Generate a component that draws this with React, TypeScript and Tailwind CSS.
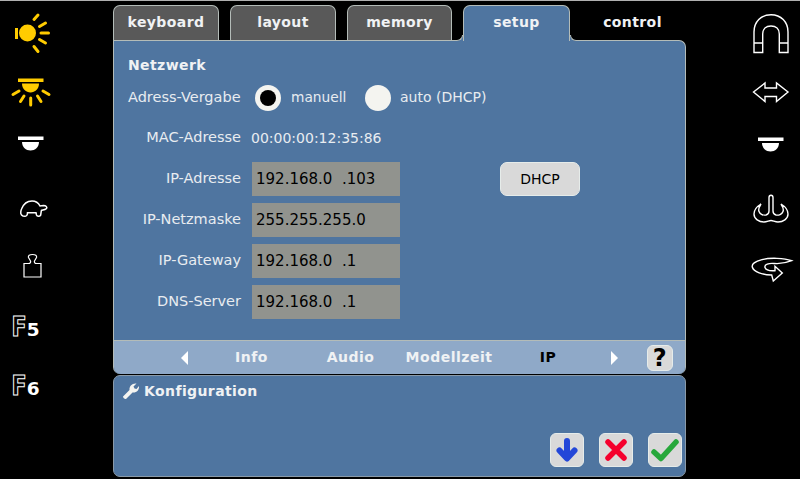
const sans = "font-['DejaVu_Sans',sans-serif]";

const tabs = [
  { label: "keyboard", cls: "w-[106px]" },
  { label: "layout", cls: "w-[106px]" },
  { label: "memory", cls: "w-[105px]" },
];
const subTabs = [
  { label: "Info", cls: "w-[99px] text-[#f0f2f4]" },
  { label: "Audio", cls: "w-[99px] text-[#f0f2f4]" },
  { label: "Modellzeit", cls: "w-[98px] text-[#f0f2f4]" },
  { label: "IP", cls: "w-[100px] text-black" },
];
const ipRows = [
  { label: "IP-Adresse", value: "192.168.0\u00a0\u00a0.103" },
  { label: "IP-Netzmaske", value: "255.255.255.0" },
  { label: "IP-Gateway", value: "192.168.0\u00a0\u00a0.1" },
  { label: "DNS-Server", value: "192.168.0\u00a0\u00a0.1" },
];

// svg in screen coordinates, so the row only has to center it
function Glyph({ x, cy, children }: { x: number; cy: number; children: React.ReactNode }) {
  return (
    <svg width="60" height="60" viewBox={`${x} ${cy - 30} 60 60`} className="shrink-0">
      {children}
    </svg>
  );
}

function LampWhite({ dx }: { dx: number }) {
  return (
    <g transform={`translate(${dx} 0)`}>
      <rect x="18" y="136.5" width="25.5" height="3.5" fill="#fff" />
      <path d="M22 142H39C39 147 35 150.5 30.5 150.5S22 147 22 142Z" fill="#fff" />
    </g>
  );
}

function FKey({ digit, cy, cls }: { digit: string; cy: number; cls: string }) {
  return (
    <div className={`${cls} flex items-center`}>
      <Glyph x={2} cy={cy}>
        <text
          transform={`translate(11.5 ${cy + 9.5}) scale(0.85 1)`}
          fontSize="26"
          fontWeight="bold"
          fill="#000"
          stroke="#fff"
          strokeWidth="1.1"
        >
          F
        </text>
        <text x="26.7" y={cy + 9.5} fontSize="18.5" fontWeight="bold" fill="#fff">
          {digit}
        </text>
      </Glyph>
    </div>
  );
}

function LeftIcons() {
  return (
    <div className="w-[113px] shrink-0 flex flex-col items-start pl-[2px]">
      <div className="h-[66px] flex items-center">
        <Glyph x={2} cy={33}>
          <circle cx="27.5" cy="33" r="8.5" fill="#fc0" />
          <rect x="15" y="28" width="3" height="11" fill="#fc0" />
          <path
            d="M34 19.5L38 15M39.5 26.5L45.5 23M41 33H48.5M39.5 39.5L45.5 43M34 46.5L38 51.5"
            stroke="#fc0"
            strokeWidth="3"
            strokeLinecap="round"
            fill="none"
          />
        </Glyph>
      </div>
      <div className="h-[50px] flex items-center">
        <Glyph x={2} cy={91}>
          <rect x="18" y="78.5" width="25.5" height="3.5" fill="#fc0" />
          <path d="M22 83.5H39C39 89 35 92.5 30.5 92.5S22 89 22 83.5Z" fill="#fc0" />
          <path
            d="M13 94.5L19 91M20.5 101.5L24 96M30.7 98V105M37.5 96L41 101.5M43 91L49 94.5"
            stroke="#fc0"
            strokeWidth="3"
            strokeLinecap="round"
            fill="none"
          />
        </Glyph>
      </div>
      <div className="h-[54px] flex items-center">
        <Glyph x={2} cy={143}>
          <LampWhite dx={0} />
        </Glyph>
      </div>
      <div className="h-[76px] flex items-center">
        <Glyph x={2} cy={208}>
          <path
            d="M23 216C20.5 215 20 212.5 21.5 209C23.5 204 27.5 201 32 201C35.5 201 38.5 203 40 206L43.5 205.5C46 205.5 47.5 207 46.5 208.5C45.5 209.8 43.5 210 41.5 210.3C41 212 41 214 40.5 215.5C39.5 216.5 37 216.5 36.5 215L36 212.8H27.5C27.5 215 26.5 216.3 25 216.2Z"
            stroke="#fff"
            strokeWidth="1.5"
            fill="none"
          />
        </Glyph>
      </div>
      <div className="h-[40px] flex items-center">
        <Glyph x={2} cy={266}>
          <path
            d="M24 277V263.5H28.5C30 263.5 31 262.5 30.5 261L28.5 257.5C28 255.5 29.5 254.5 32.5 254.5C35.5 254.5 37 255.5 36.5 257.5L34.5 261C34 262.5 35 263.5 36.5 263.5H41V277Z"
            stroke="#fff"
            strokeWidth="1.2"
            fill="none"
          />
        </Glyph>
      </div>
      <FKey digit="5" cy={326} cls="h-[80px]" />
      <FKey digit="6" cy={385} cls="h-[38px]" />
    </div>
  );
}

function RightIcons() {
  const line = { stroke: "#fff", strokeWidth: 1.4, fill: "none" };
  return (
    <div className="w-[114px] shrink-0 flex flex-col items-end">
      <div className="h-[66px] flex items-center">
        <Glyph x={740} cy={33}>
          <path
            d="M754 52.5V32C754 22 761 14.7 771 14.7S788 22 788 32V52.5H779.3V34C779.3 29 776 26 771 26S762.7 29 762.7 34V52.5ZM754 43H762.7M779.3 43H788"
            {...line}
          />
        </Glyph>
      </div>
      <div className="h-[52px] flex items-center">
        <Glyph x={740} cy={92}>
          <path d="M753.5 92L765 83V88H776.5V83L788 92L776.5 101.5V96.5H765V101.5Z" {...line} />
        </Glyph>
      </div>
      <div className="h-[51px] flex items-center">
        <Glyph x={740} cy={143}>
          <LampWhite dx={740} />
        </Glyph>
      </div>
      <div className="h-[83px] flex items-center">
        <Glyph x={740} cy={210}>
          <path
            d="M761 203C756 206 754 209 754 213C754 218 759 221 764 221C767 221 769 219.5 771 219.5C773 219.5 775 221 778 221C783 221 788 218 788 213C788 209 786 206 781 203C783 206 784 208 783 210.5C782 213.5 778.5 214.5 776 214C774 213.5 773 212 773 210V196.5C773 193.5 769 193.5 769 196.5V210C769 212 768 213.5 766 214C763.5 214.5 760 213.5 759 210.5C758 208 759 206 761 203Z"
            {...line}
          />
        </Glyph>
      </div>
      <div className="h-[30px] flex items-center">
        <Glyph x={740} cy={266}>
          <path
            d="M791.7 259.7C784 257 770 256.5 762 258.7C755 260.5 751.5 263 752.3 266C753.5 271 763 274 771.7 274L773.3 280L782.3 272L775 265.3L775 269.7C771 270 766 269.5 765 266.5C764 263.5 769 262 774 262.5C780 263 786 262 791.7 259.7Z"
            {...line}
          />
        </Glyph>
      </div>
    </div>
  );
}

function TabBar() {
  return (
    <div className="flex h-[35px] relative z-10">
      {tabs.map((t) => (
        <div
          key={t.label}
          className={`${t.cls} mr-[11px] bg-[#595959] border border-b-0 border-[#b4bcb8] rounded-t-[7px] flex items-center justify-center text-[14px] font-bold tracking-[0.4px] text-[#f0f2f4] pb-[1px]`}
        >
          {t.label}
        </div>
      ))}
      <div className="w-[107px] relative -mb-[1px] bg-[#4f75a0] border border-b-0 border-[#b4bcb8] rounded-t-[7px] flex items-center justify-center text-[14px] font-bold tracking-[0.4px] text-[#f0f2f4] pb-[2px]">
        setup
        <span className="absolute -left-[7px] bottom-0 w-[6px] h-[6px] bg-[#4f75a0]">
          <span className="block w-full h-full bg-black border-r border-b border-[#b4bcb8] rounded-br-[6px]" />
        </span>
        <span className="absolute -right-[7px] bottom-0 w-[6px] h-[6px] bg-[#4f75a0]">
          <span className="block w-full h-full bg-black border-l border-b border-[#b4bcb8] rounded-bl-[6px]" />
        </span>
      </div>
      <div className="flex-1 flex items-center justify-center text-[14px] font-bold tracking-[0.4px] text-[#f0f2f4] pb-[1px] pl-[9px]">
        control
      </div>
    </div>
  );
}

function NetworkForm() {
  return (
    <div className="h-[299px] pl-[14px] pt-[15px] text-[14.5px] text-[#e8ecf0]">
      <div className="font-bold text-[14px] tracking-[0.4px] leading-[18px] text-[#f0f2f4]">Netzwerk</div>
      <div className="flex items-center h-[32px] mt-[8px]">
        <span className="w-[127px] pb-[1px]">Adress-Vergabe</span>
        <span className="w-[26px] h-[26px] rounded-full bg-[#f4f4f0] flex items-center justify-center">
          <span className="w-[16px] h-[16px] rounded-full bg-black" />
        </span>
        <span className="ml-[10px] w-[74px] text-[13.75px] pb-[1px]">manuell</span>
        <span className="w-[26px] h-[26px] rounded-full bg-[#f4f4f0]" />
        <span className="ml-[9px] text-[14px] pb-[1px]">auto (DHCP)</span>
      </div>
      <div className="flex items-center h-[20px] mt-[14px]">
        <span className="w-[113px] text-right">MAC-Adresse</span>
        <span className="ml-[10px] text-[14px]">00:00:00:12:35:86</span>
      </div>
      <div className="flex flex-col gap-[7px] mt-[14px]">
        {ipRows.map((r, i) => (
          <div key={r.label} className="flex items-center h-[34px]">
            <span className="w-[113px] text-right pb-[1px]">{r.label}</span>
            <div className="ml-[11px] w-[148px] h-full bg-[#91938e] flex items-center pl-[4px] text-[15px] text-black">
              {r.value}
            </div>
            {i === 0 && (
              <button className="ml-[100px] w-[80px] h-[34px] rounded-[7px] bg-[#d9d9d9] border border-[#e6ecea] text-[14px] text-black">
                DHCP
              </button>
            )}
          </div>
        ))}
      </div>
    </div>
  );
}

function SubNav() {
  return (
    <div className="h-[34px] bg-[#8fa9c8] border-t border-[#b4bcb8] rounded-b-[7px] flex items-center text-[14px] font-bold tracking-[0.5px]">
      <svg width="10" height="14" viewBox="0 0 10 14" className="ml-[66px] mr-[12px]">
        <path d="M8 0V14L1 7Z" fill="#fff" />
      </svg>
      {subTabs.map((s) => (
        <span key={s.label} className={`${s.cls} text-center`}>
          {s.label}
        </span>
      ))}
      <svg width="10" height="14" viewBox="0 0 10 14" className="ml-[12px]">
        <path d="M1 0V14L8 7Z" fill="#fff" />
      </svg>
      <div className="ml-[27px] w-[26px] h-[26px] rounded-[6px] bg-[#d9d9d9] border border-[#e6ecea] flex items-center justify-center text-[24px] leading-none font-bold text-black">
        ?
      </div>
    </div>
  );
}

function ActionButton({ children }: { children: React.ReactNode }) {
  return (
    <div className="w-[34px] h-[34px] rounded-[6px] bg-[#d9d9d9] border border-[#e6ecea] flex items-center justify-center">
      {children}
    </div>
  );
}

function ConfigPanel() {
  return (
    <div className="mt-[1px] h-[102px] bg-[#4f75a0] border border-[#8a9aa8] rounded-[7px] flex flex-col px-[8px]">
      <div className="flex items-center gap-[4px] mt-[6px] h-[18px] text-[14px] font-bold tracking-[0.4px] text-[#f0f2f4]">
        <svg width="18" height="18" viewBox="0 0 18 18" className="shrink-0">
          <path
            fill="#f4f4f0"
            d="M1 14.5L7.5 8C7 4.5 10 1 14.5 1.5L11.5 4.5L12.5 6.5L14.5 7L17 4C17.5 8 14.5 11 10.5 10.5L4 17C3 17.5 1 16 1 14.5Z"
          />
        </svg>
        Konfiguration
      </div>
      <div className="mt-auto mb-[9px] flex justify-end gap-[15px] -mr-[5px]">
        <ActionButton>
          <svg width="24" height="24" viewBox="0 0 24 24">
            <path d="M12 3V20M4.5 12.5L12 20.5L19.5 12.5" stroke="#2347d8" strokeWidth="6" strokeLinecap="round" strokeLinejoin="round" fill="none" />
          </svg>
        </ActionButton>
        <ActionButton>
          <svg width="26" height="26" viewBox="0 0 26 26">
            <path d="M5 5L21 21M21 5L5 21" stroke="#f5002d" strokeWidth="5.5" strokeLinecap="round" />
          </svg>
        </ActionButton>
        <ActionButton>
          <svg width="30" height="26" viewBox="0 0 30 26">
            <path d="M4 15L11 21.5L26 5" stroke="#27a83c" strokeWidth="5.5" strokeLinecap="round" strokeLinejoin="round" fill="none" />
          </svg>
        </ActionButton>
      </div>
    </div>
  );
}

export default function App() {
  return (
    <div className={`w-[800px] h-[479px] overflow-hidden bg-black shadow-[inset_0_1px_0_#b0b0b0] flex ${sans}`}>
      <LeftIcons />
      <div className="w-[573px] shrink-0 pt-[5px]">
        <TabBar />
        <div className="bg-[#4f75a0] border-x border-t border-[#b4bcb8] rounded-tr-[7px] rounded-b-[7px]">
          <NetworkForm />
          <SubNav />
        </div>
        <ConfigPanel />
      </div>
      <RightIcons />
    </div>
  );
}
